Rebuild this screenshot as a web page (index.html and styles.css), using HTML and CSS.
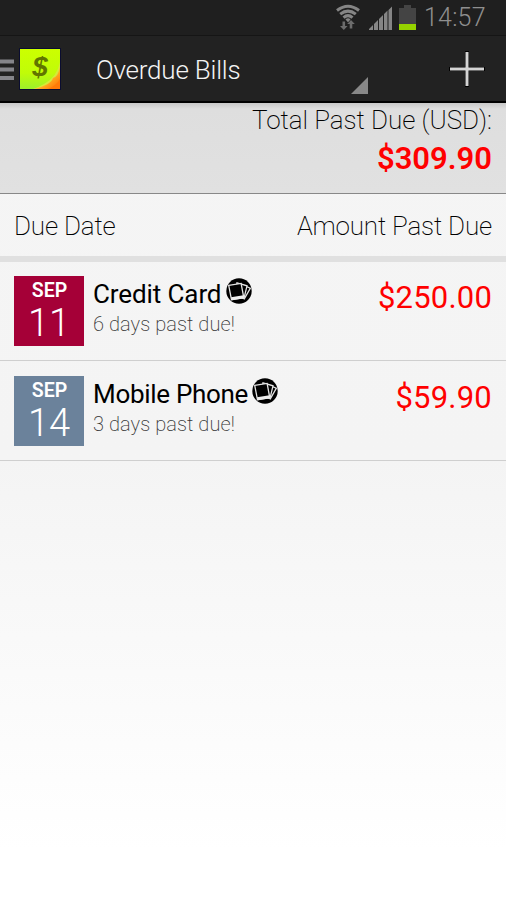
FILE: index.html
```html
<!DOCTYPE html>
<html lang="en">
<head>
<meta charset="utf-8">
<title>Overdue Bills</title>
<link rel="stylesheet" href="styles.css">
</head>
<body>
<svg class="defs" width="0" height="0" aria-hidden="true">
  <symbol id="photos" viewBox="0 0 26 26">
    <circle cx="13" cy="13" r="12.7" fill="#000"/>
    <g fill="#000" stroke="#e4e4e4" stroke-width="1.3">
      <path d="M15 6.200l9.300 4-6 10.600-8-4z"/>
      <path d="M11 4.800l10 3-3 12.500-9-2z"/>
      <path d="M2.700 7.300l12.400-1.900 2.700 14.400-12.300 2z"/>
    </g>
    <path d="M5 19.200l12.500-2 .5 3-12.300 2z" fill="#eee"/>
  </symbol>
</svg>
<div class="status">
  <svg class="wifi" width="24" height="28" viewBox="0 0 24 28">
    <g fill="none" stroke="#858585" stroke-width="3">
      <path d="M1 6.500Q12-2 23 6.500"/>
      <path d="M4.200 10.200Q12 4 19.800 10.200"/>
      <path d="M7.500 13.600Q12 9.600 16.500 13.600"/>
    </g>
    <path d="M9.500 15.400Q12 13 14.500 15.400L12 18.200z" fill="#858585"/>
    <path d="M6.500 17.500h2.600v4.500h2.500l-3.800 4-3.800-4h2.500zM13.700 24.500v-4.500h-2.500l3.800-4 3.800 4h-2.500v4.500z" fill="#6c6c6c"/>
  </svg>
  <svg class="signal" width="24" height="24" viewBox="0 0 24 24">
    <path d="M0 24v-1l4-4v5zM5 24v-6l4-4v10zM10 24V13l4-4v15zM15 24V8l3.500-3.500V24zM19.500 24V4L23 .5V24z" fill="#858585"/>
  </svg>
  <svg class="battery" width="17" height="25" viewBox="0 0 17 25">
    <path d="M5 0h7v3h5v22H0V3h5z" fill="#444"/>
    <path d="M0 19h17v6H0z" fill="#95d300"/>
  </svg>
  <span class="clock">14:57</span>
</div>
<header class="bar">
  <svg class="menu" width="14" height="22" viewBox="0 0 14 22">
    <path d="M0 .5h14v4H0zM0 8.500h14v4H0zM0 17h14v4H0z" fill="#85858a"/>
  </svg>
  <svg class="logo" width="42" height="42" viewBox="0 0 42 42">
    <defs>
      <linearGradient id="note" x1="0" y1="0" x2="0" y2="1"><stop offset="0" stop-color="#ccff00"/><stop offset=".6" stop-color="#c0fc08"/><stop offset="1" stop-color="#9cf02c"/></linearGradient>
      <linearGradient id="curl" x1="0" y1="0" x2="1" y2="1"><stop offset=".2" stop-color="#ffdf55"/><stop offset=".6" stop-color="#ffac20"/><stop offset="1" stop-color="#ff6500"/></linearGradient>
    </defs>
    <path d="M0 0h42v42H0z" fill="#0a0d30"/>
    <path d="M1 1h40v40H1z" fill="url(#note)"/>
    <path d="M41 14Q38 29 25 36Q20 39 14 41h27z" fill="#d5e93a"/>
    <path d="M41 19Q39 29 34 30Q32 37 15 41h26z" fill="url(#curl)"/>
    <path d="M41 31Q38 37 29 41h12z" fill="#ff7a08"/>
    <text x="21" y="28" text-anchor="middle" class="dollar">$</text>
  </svg>
  <h1 class="title">Overdue Bills</h1>
  <svg class="spinner" width="17" height="17" viewBox="0 0 17 17"><path d="M17 0v17H0z" fill="#888"/></svg>
  <svg class="add" width="36" height="36" viewBox="0 0 36 36">
    <path d="M16 0h4v16h16v4H20v16h-4V20H0v-4h16z" fill="#000"/>
    <path d="M16.500 1h3v15.500H35v3H19.500V35h-3V19.500H1v-3h15.500z" fill="#d4d4d4"/>
  </svg>
</header>
<section class="total">
  <div class="total-label">Total Past Due (USD):</div>
  <div class="total-sum">$309.90</div>
</section>
<div class="columns"><span class="col-date">Due Date</span><span class="col-amount">Amount Past Due</span></div>
<main>
  <article class="bill">
    <div class="date red"><div class="month">SEP</div><div class="day">11</div></div>
    <div class="info">
      <div class="name"><span class="card">Credit Card</span><svg class="photo" width="26" height="26"><use href="#photos"/></svg></div>
      <div class="late">6 days past due!</div>
    </div>
    <div class="amount">$250.00</div>
  </article>
  <article class="bill">
    <div class="date blue"><div class="month">SEP</div><div class="day">14</div></div>
    <div class="info">
      <div class="name"><span class="phone">Mobile Phone</span><svg class="photo" width="26" height="26"><use href="#photos"/></svg></div>
      <div class="late">3 days past due!</div>
    </div>
    <div class="amount">$59.90</div>
  </article>
</main>
</body>
</html>
```
FILE: styles.css
```css
* { box-sizing: border-box; }
body {
  margin: 0;
  height: 900px;
  overflow: hidden;
  font-family: Roboto, sans-serif;
  color: #000;
  background: linear-gradient(#f5f5f5 0, #f4f4f4 460px, #fff 850px);
}
svg { display: block; flex: none; }
.defs { position: absolute; }
.status {
  height: 36px;
  display: flex;
  align-items: flex-start;
  background: #1f1f1f;
  border-bottom: 1px solid #151515;
}
.wifi { margin: 4px 0 0 336px; }
.signal { margin: 6px 0 0 9px; }
.battery { margin: 5px 0 0 6px; }
.clock { margin-left: 8px; font-size: 25px; line-height: 36px; letter-spacing: 0.2px; color: #8f8f8f; white-space: nowrap; font-weight: 340; }
.bar {
  height: 67px;
  display: flex;
  align-items: flex-start;
  background: #222;
  border-bottom: 2px solid #000;
}
.menu { margin-top: 23px; }
.logo { margin: 12px 0 0 5px; }
.dollar { font: italic 700 28px "Liberation Sans", sans-serif; fill: #617500; }
.title { margin: 18px 0 0 35px; width: 255px; font-size: 26px; font-weight: 300; letter-spacing: -0.2px; line-height: 32px; color: #f4f4f4; white-space: nowrap; }
.spinner { margin-top: 41px; }
.add { margin: 15px 0 0 81px; }
.total {
  height: 91px;
  padding: 0 14px;
  text-align: right;
  background: linear-gradient(#c8c8c8, #dedede 6px, #e1e1e1);
  border-bottom: 1px solid #888;
}
.total-label { font-size: 26px; font-weight: 220; line-height: 35px; letter-spacing: -0.05px; }
.total-sum { font-size: 31px; font-weight: 600; line-height: 42px; color: #f00; }
.columns {
  height: 68px;
  padding: 15px 14px 0;
  display: flex;
  justify-content: space-between;
  font-size: 26px;
  font-weight: 220;
  line-height: 34px;
  letter-spacing: -0.2px;
  border-bottom: 6px solid #e0e0e0;
}
.bill {
  height: 100px;
  padding: 15px 14px 0;
  display: flex;
  border-bottom: 1px solid #cfcfcf;
}
.bill:first-child { height: 99px; padding-top: 14px; }
.date { width: 70px; height: 70px; color: #fff; text-align: center; }
.red { background: #a50037; }
.blue { background: #6b829b; }
.month { padding-left: 1px; font-size: 19.5px; font-weight: 600; line-height: 29px; }
.day { font-size: 38px; font-weight: 280; line-height: 37px; }
.info { margin-left: 9px; }
.name { display: flex; font-size: 26px; font-weight: 380; line-height: 36px; white-space: nowrap; }
.card { width: 127px; letter-spacing: -0.1px; }
.phone { width: 153px; letter-spacing: -0.3px; }
.photo { margin: 2px 0 0 6px; }
.late { font-size: 20px; font-weight: 200; line-height: 24px; letter-spacing: 0.07px; color: #333; white-space: nowrap; }
.amount { margin-left: auto; font-size: 31px; font-weight: 370; line-height: 43px; letter-spacing: 0.2px; color: #f00; }
```
